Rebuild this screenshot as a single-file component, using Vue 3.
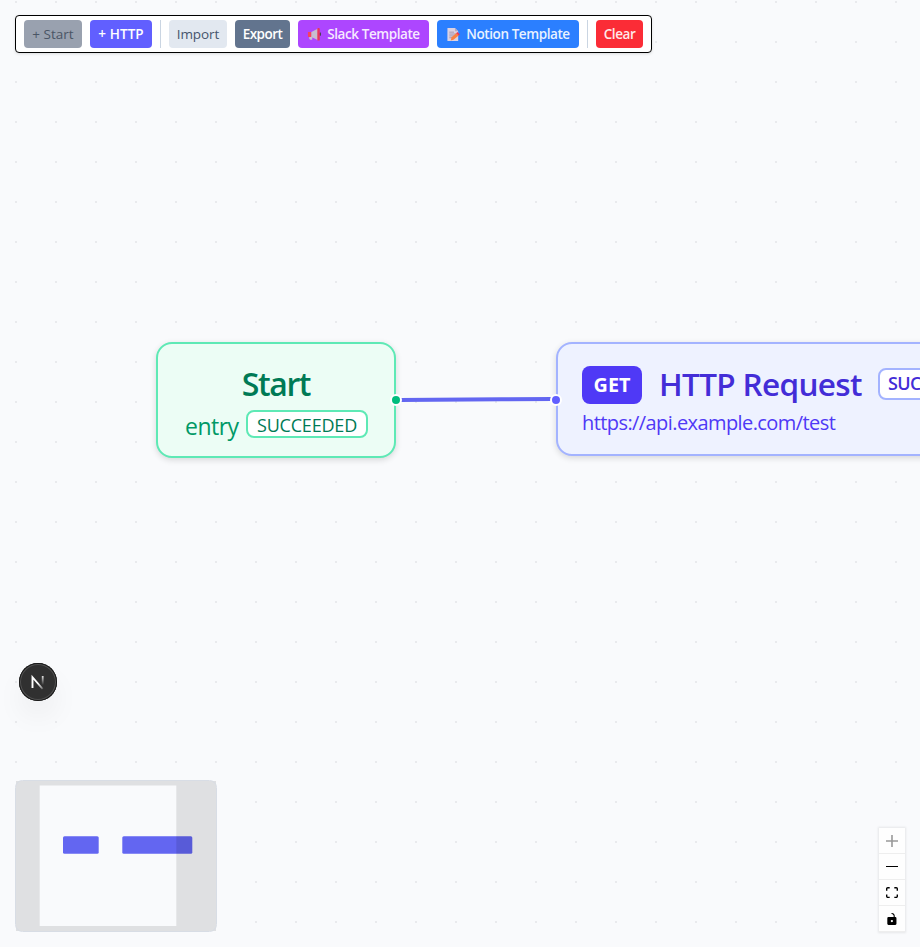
<script setup>
const plusPath = 'M32 18.133H18.133V32h-4.266V18.133H0v-4.266h13.867V0h4.266v13.867H32z'
const minusPath = 'M0 0h32v4.2H0z'
const fitPath = 'M3.692 4.63c0-.53.4-.938.939-.938h5.215V0H4.708C2.13 0 0 2.054 0 4.63v5.216h3.692V4.631zM27.354 0h-5.2v3.692h5.17c.53 0 .984.4.984.939v5.215H32V4.631A4.624 4.624 0 0027.354 0zm.954 24.83c0 .532-.4.94-.939.94h-5.215v3.768h5.215c2.577 0 4.631-2.13 4.631-4.707v-5.139h-3.692v5.139zm-23.677.94c-.531 0-.939-.4-.939-.94v-5.138H0v5.139c0 2.577 2.13 4.707 4.708 4.707h5.138V25.77H4.631z'
const unlockPath = 'M21.333 10.667H19.81V7.619C19.81 3.429 16.38 0 12.19 0c-4.114 1.828-1.37 2.133.305 2.438 1.676.305 4.42 2.59 4.42 5.181v3.048H3.047A3.056 3.056 0 000 13.714v15.238A3.056 3.056 0 003.048 32h18.285a3.056 3.056 0 003.048-3.048V13.714a3.056 3.056 0 00-3.048-3.047zM12.19 24.533a3.056 3.056 0 01-3.047-3.047 3.056 3.056 0 013.047-3.048 3.056 3.056 0 013.048 3.048 3.056 3.056 0 01-3.048 3.047z'
const controls = [
  { name: 'zoom in', box: '0 0 32 32', path: plusPath, disabled: true },
  { name: 'zoom out', box: '0 0 32 5', path: minusPath },
  { name: 'fit view', box: '0 0 32 30', path: fitPath },
  { name: 'toggle interactivity', box: '0 0 25 32', path: unlockPath }
]
</script>

<template>
  <main class="canvas">
    <svg class="edges" width="920" height="947">
      <path d="M400 400 C 450 400, 502 399, 553 399" />
    </svg>

    <nav class="toolbar">
      <button class="btn start" disabled>+ Start</button>
      <button class="btn http">+ HTTP</button>
      <span class="divider"></span>
      <button class="btn import">Import</button>
      <button class="btn export">Export</button>
      <button class="btn slack">
        <svg class="emoji" viewBox="0 0 16 16">
          <path d="M2.4 9.5h3.2v4H3.600q-1.200 0-1.200-1.400z" fill="#c9bfd3" />
          <path d="M1 5.200h4v5.500H1.800Q1 10.700 1 9.900z" fill="#f8415f" />
          <path d="M4.600 5.200L12 1.500v12.500L4.600 10.700z" fill="#c8bdd0" />
          <ellipse cx="14" cy="7.500" rx="1" ry="2" fill="#4b4050" />
          <rect x="11" y="1" width="2.600" height="13.500" rx="1" fill="#e8365a" />
        </svg>
        <span>Slack Template</span>
      </button>
      <button class="btn notion">
        <svg class="emoji" viewBox="0 0 16 16">
          <path d="M1.500 1h8L13 4.500V15H1.500z" fill="#dcd2e2" />
          <path d="M9.500 1L13 4.500H9.500z" fill="#b8a9c2" />
          <path d="M3.500 5.500h5M3.500 7.500h7M3.500 9.500h5M3.500 11.500h3" stroke="#a393ae" />
          <path d="M5 14.500l1-3.500 5-4.500 2.500 2.500-5.500 4.500z" fill="#f98243" />
          <path d="M10.800 6.600l1.400-1.200 2.600 2.400-1.400 1.300z" fill="#ee3855" />
        </svg>
        <span>Notion Template</span>
      </button>
      <span class="divider"></span>
      <button class="btn clear">Clear</button>
    </nav>

    <section class="node start-node">
      <h2>Start</h2>
      <div class="row">
        <span class="entry">entry</span>
        <span class="status">SUCCEEDED</span>
      </div>
      <i class="handle right"></i>
    </section>

    <section class="node http-node">
      <div class="row">
        <span class="method">GET</span>
        <h2>HTTP Request</h2>
        <span class="status">SUCCEEDED</span>
      </div>
      <p>https://api.example.com/test</p>
      <i class="handle left"></i>
    </section>

    <button class="next-badge" aria-label="Next.js">
      <svg width="38" height="38" viewBox="0 0 38 38" fill="none">
        <defs>
          <linearGradient id="fadeDiag" x1="19" y1="20" x2="24.500" y2="26" gradientUnits="userSpaceOnUse">
            <stop stop-color="#fff" />
            <stop offset=".7" stop-color="#fff" stop-opacity=".5" />
            <stop offset="1" stop-color="#fff" stop-opacity=".1" />
          </linearGradient>
          <linearGradient id="fadeStem" x1="24" y1="13" x2="24" y2="22" gradientUnits="userSpaceOnUse">
            <stop stop-color="#fff" stop-opacity=".85" />
            <stop offset="1" stop-color="#fff" stop-opacity="0" />
          </linearGradient>
        </defs>
        <path d="M13.500 25V14.200L23.700 26" stroke="url(#fadeDiag)" stroke-width="1.900" />
        <rect x="22.800" y="13" width="1.800" height="9" fill="url(#fadeStem)" />
      </svg>
    </button>

    <svg class="minimap" width="202" height="152" viewBox="0 0 202 152">
      <rect x="1" y="1" width="200" height="150" fill="#f9fafc" />
      <rect x="48" y="56.200" width="35.700" height="17.500" rx="1.500" fill="#6366f1" />
      <rect x="107.300" y="56.200" width="70" height="17.500" rx="1.500" fill="#6366f1" />
      <path d="M1 1h200v150H1zM24.700 5.500v140.500h136.600V5.500z" fill="#000" fill-opacity=".1" fill-rule="evenodd" />
      <rect x=".5" y=".5" width="201" height="151" rx="7" fill="none" stroke="#d8dde5" />
    </svg>

    <div class="controls">
      <button v-for="c in controls" :key="c.name" :aria-label="c.name" :disabled="c.disabled">
        <svg :viewBox="c.box"><path :d="c.path" /></svg>
      </button>
    </div>
  </main>
</template>

<style>
body {
  margin: 0;
}
</style>

<style scoped>
.canvas {
  position: relative;
  width: 920px;
  height: 947px;
  overflow: hidden;
  background-color: #f9fafc;
  background-image: radial-gradient(circle at 20px 20px, #e9eaed 0, #e9eaed 1px, transparent 1.500px);
  background-size: 40px 40px;
  background-position: -4px -18px;
  font-family: "Open Sans", "Noto Sans", sans-serif;
}
button {
  border: 0;
  padding: 0;
  font: inherit;
}
.edges {
  position: absolute;
  inset: 0;
}
.edges path {
  fill: none;
  stroke: #6366f1;
  stroke-width: 4;
}
.toolbar {
  position: absolute;
  left: 15px;
  top: 15px;
  box-sizing: border-box;
  width: 637px;
  height: 38px;
  display: flex;
  gap: 8px;
  padding: 4px 8px;
  background: #fff;
  border: 1px solid #000;
  border-radius: 4px;
  box-shadow: 0 1px 3px rgba(0, 0, 0, .12);
}
.btn {
  height: 28px;
  flex: none;
  display: flex;
  align-items: center;
  justify-content: center;
  border-radius: 4px;
  color: #fff;
  font-size: 13.500px;
  font-weight: 600;
  letter-spacing: -.42px;
  white-space: nowrap;
}
.start { width: 58px; background: #99a1af; color: #4a5565; font-weight: 400; letter-spacing: 0; }
.http { width: 62px; background: #615fff; letter-spacing: .1px; }
.import { width: 58px; background: #e2e8f0; color: #45556c; font-weight: 400; letter-spacing: -.1px; }
.export { width: 55px; background: #62748e; letter-spacing: -.550px; }
.slack { width: 131px; background: #ad46ff; color: #f6e9ff; }
.notion { width: 142px; background: #2b7fff; color: #e8f2ff; }
.clear { width: 47px; background: #fb2c36; color: #ffe9ea; }
.emoji {
  width: 15px;
  height: 15px;
  margin-right: 5px;
}
.divider {
  width: 1px;
  background: #cad5e2;
}
.node {
  position: absolute;
  top: 342px;
  box-sizing: border-box;
  border: 2px solid;
  border-radius: 16px;
  box-shadow: 0 2px 6px rgba(0, 0, 0, .14);
}
.node h2 {
  margin: 0;
  font-size: 32px;
  line-height: 38px;
  height: 40px;
  font-weight: 600;
}
.row {
  display: flex;
  white-space: nowrap;
}
.status {
  box-sizing: border-box;
  border: 2px solid;
  border-radius: 8px;
  background: #fff;
  font-size: 18px;
  text-align: center;
}
.start-node {
  left: 156px;
  width: 240px;
  height: 116px;
  padding-top: 21px;
  background: #ecfdf5;
  border-color: #5ee9b5;
  color: #007a55;
}
.start-node h2 {
  text-align: center;
  letter-spacing: -1.400px;
}
.start-node .row {
  padding-left: 27px;
  gap: 7px;
}
.entry {
  width: 54px;
  color: #096;
  font-size: 23px;
  line-height: 42px;
  height: 40px;
  letter-spacing: -.5px;
}
.start-node .status {
  width: 122px;
  height: 28px;
  margin-top: 5px;
  border-color: #5ee9b5;
  line-height: 26px;
  letter-spacing: -.2px;
}
.http-node {
  left: 556px;
  width: 470px;
  height: 114px;
  padding: 21px 24px;
  background: #eef2ff;
  border-color: #a3b3ff;
  color: #432dd7;
}
.method {
  width: 60px;
  height: 38px;
  margin: 1px 17px 0 0;
  border-radius: 8px;
  background: #4f39f6;
  color: #fff;
  font-size: 19.800px;
  font-weight: 700;
  line-height: 38px;
  text-align: center;
}
.http-node h2 {
  width: 219px;
  font-size: 31.500px;
  font-weight: 600;
  letter-spacing: -.650px;
}
.http-node .status {
  width: 122px;
  height: 32px;
  margin-top: 3px;
  padding-left: 8px;
  border-color: #a3b3ff;
  font-weight: 600;
  letter-spacing: -.6px;
  line-height: 27px;
  text-align: left;
}
.http-node p {
  margin: 4px 0 0;
  color: #4f39f6;
  font-size: 20px;
  line-height: 28px;
  letter-spacing: -.580px;
}
.handle {
  position: absolute;
  top: 50px;
  width: 8px;
  height: 8px;
  border: 2px solid #fff;
  border-radius: 50%;
}
.right { right: -8px; background: #00bc7d; }
.left { left: -8px; background: #615fff; }
.next-badge {
  position: absolute;
  left: 19px;
  top: 663px;
  width: 38px;
  height: 38px;
  border-radius: 50%;
  background: #303030;
  box-shadow: inset 0 0 0 1px #171717, inset 0 0 0 2px #515151, 0 16px 32px -8px rgba(0, 0, 0, .14);
}
.next-badge svg { display: block; }
.minimap {
  position: absolute;
  left: 15px;
  top: 780px;
}
.controls {
  position: absolute;
  left: 879px;
  top: 828px;
  width: 26px;
  display: flex;
  flex-direction: column;
  box-shadow: 0 0 2px 1px rgba(0, 0, 0, .08);
}
.controls button {
  box-sizing: border-box;
  height: 26px;
  display: flex;
  align-items: center;
  justify-content: center;
  background: #fefefe;
  border-bottom: 1px solid #eee;
}
.controls svg {
  width: 12px;
  max-height: 12px;
}
.controls button:disabled svg { fill-opacity: .4; }
</style>
